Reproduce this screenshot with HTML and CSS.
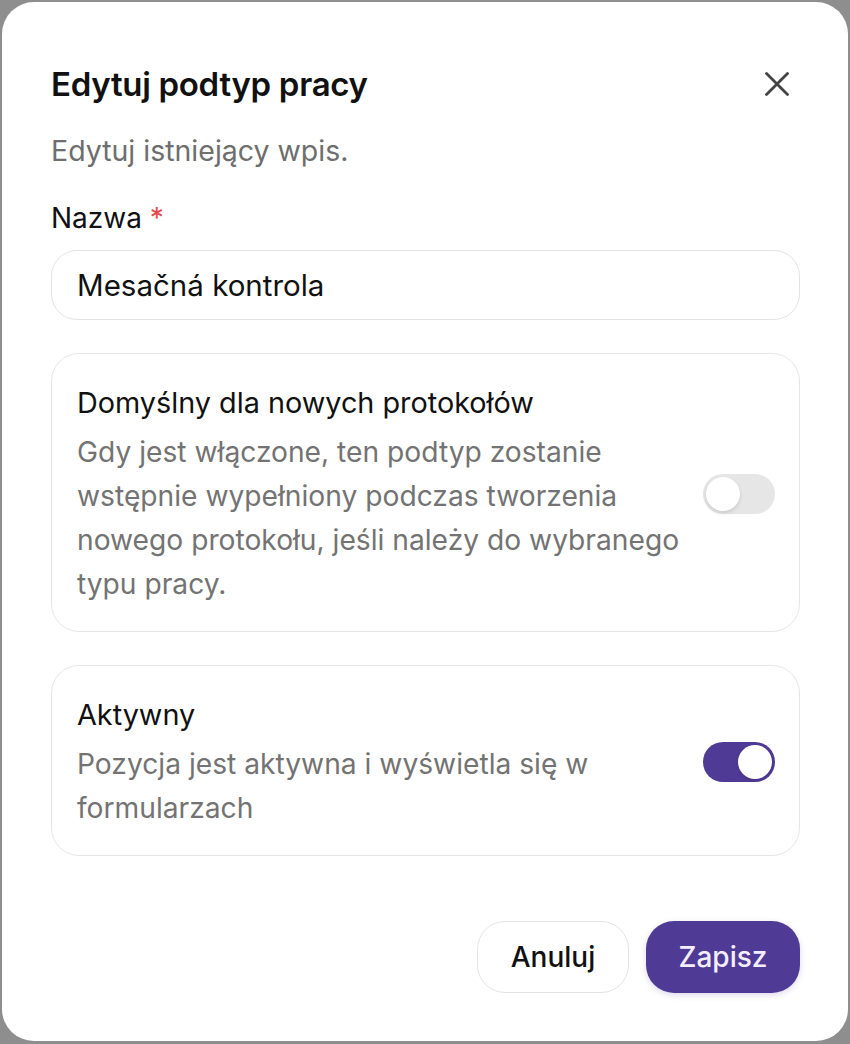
FILE: index.html
```html
<!DOCTYPE html>
<html lang="pl">
<head>
<meta charset="utf-8">
<title>Edytuj podtyp pracy</title>
<link rel="stylesheet" href="styles.css">
</head>
<body>
<div class="dialog" role="dialog" aria-labelledby="dlg-title">
  <div class="header">
    <h2 id="dlg-title" class="title">Edytuj podtyp pracy</h2>
    <button class="close" aria-label="Zamknij">
      <svg viewBox="0 0 24 24" width="24" height="24" fill="none" stroke="currentColor" stroke-width="2.8" stroke-linecap="round"><path d="M1.5 1.5L22.5 22.5M22.5 1.5L1.5 22.5"/></svg>
    </button>
  </div>
  <p class="subtitle">Edytuj istniejący wpis.</p>

  <label class="label" for="name">Nazwa <span class="req">*</span></label>
  <input id="name" class="input" type="text" value="Mesačná kontrola">

  <div class="card">
    <div class="card-text">
      <div class="card-title">Domyślny dla nowych protokołów</div>
      <div class="card-desc">Gdy jest włączone, ten podtyp zostanie wstępnie wypełniony podczas tworzenia nowego protokołu, jeśli należy do wybranego typu pracy.</div>
    </div>
    <span class="switch"><span class="knob"></span></span>
  </div>

  <div class="card">
    <div class="card-text">
      <div class="card-title">Aktywny</div>
      <div class="card-desc">Pozycja jest aktywna i wyświetla się w formularzach</div>
    </div>
    <span class="switch on"><span class="knob"></span></span>
  </div>

  <div class="footer">
    <button class="btn btn-outline">Anuluj</button>
    <button class="btn btn-primary">Zapisz</button>
  </div>
</div>
</body>
</html>
```

FILE: styles.css
```css
* { box-sizing: border-box; }
html, body { margin: 0; padding: 0; }
body {
  background: #8e8e8e;
  font-family: "Inter", "Noto Sans", sans-serif;
  color: #111;
  padding: 2px;
  height: 1044px;
  overflow: hidden;
}
.dialog {
  background: #fff;
  border-radius: 32px;
  height: 1039px;
  padding: 62px 48px 48px 49px;
  display: flex;
  flex-direction: column;
}
.header {
  display: flex;
  align-items: center;
  justify-content: space-between;
  height: 40px;
}
.title {
  margin: 0;
  font-size: 33px;
  font-weight: 600;
  line-height: 40px;
  letter-spacing: -0.3px;
  color: #111;
}
.close {
  background: none;
  border: 0;
  padding: 0;
  margin-right: 11px;
  color: #444;
  display: flex;
}
.subtitle {
  margin: 27px 0 0;
  font-size: 28.5px;
  line-height: 40px;
  color: #6e6e6e;
}
.label {
  margin-top: 27px;
  font-size: 28px;
  line-height: 40px;
  color: #111;
}
.req { color: #e5484d; }
.input {
  margin-top: 12px;
  height: 70px;
  width: 100%;
  border: 1.5px solid #e3e3e3;
  border-radius: 26px;
  padding: 0 25px;
  font: inherit;
  font-size: 29.5px;
  color: #111;
  outline: none;
}
.card {
  margin-top: 33px;
  border: 1.5px solid #e6e6e6;
  border-radius: 28px;
  padding: 27px 24px 25px 25px;
  display: flex;
  align-items: center;
  gap: 16px;
}
.card + .card { margin-top: 33px; }
.card-text { flex: 1; }
.card-title {
  font-size: 28.8px;
  line-height: 44px;
  color: #111;
}
.card-desc {
  margin-top: 5px;
  font-size: 28.2px;
  line-height: 44px;
  color: #737373;
}
.switch {
  flex: none;
  width: 72px;
  height: 40px;
  border-radius: 20px;
  background: #e6e6e6;
  padding: 3px;
  display: flex;
}
.switch .knob {
  width: 34px;
  height: 34px;
  border-radius: 50%;
  background: #fff;
  box-shadow: 0 2px 4px rgba(0,0,0,0.12);
}
.switch.on {
  background: #4f3a96;
  justify-content: flex-end;
}
.footer {
  margin-top: auto;
  display: flex;
  justify-content: flex-end;
  gap: 17px;
}
.btn {
  height: 72px;
  border-radius: 28px;
  font: inherit;
  font-size: 28px;
  font-weight: 500;
  padding: 0;
}
.btn-outline {
  width: 152px;
  background: #fff;
  border: 1.5px solid #e3e3e3;
  color: #111;
}
.btn-primary {
  width: 154px;
  background: #4f3a96;
  border: 0;
  color: #f3eeff;
  box-shadow: 0 2px 6px rgba(79,58,150,0.2);
}
```
